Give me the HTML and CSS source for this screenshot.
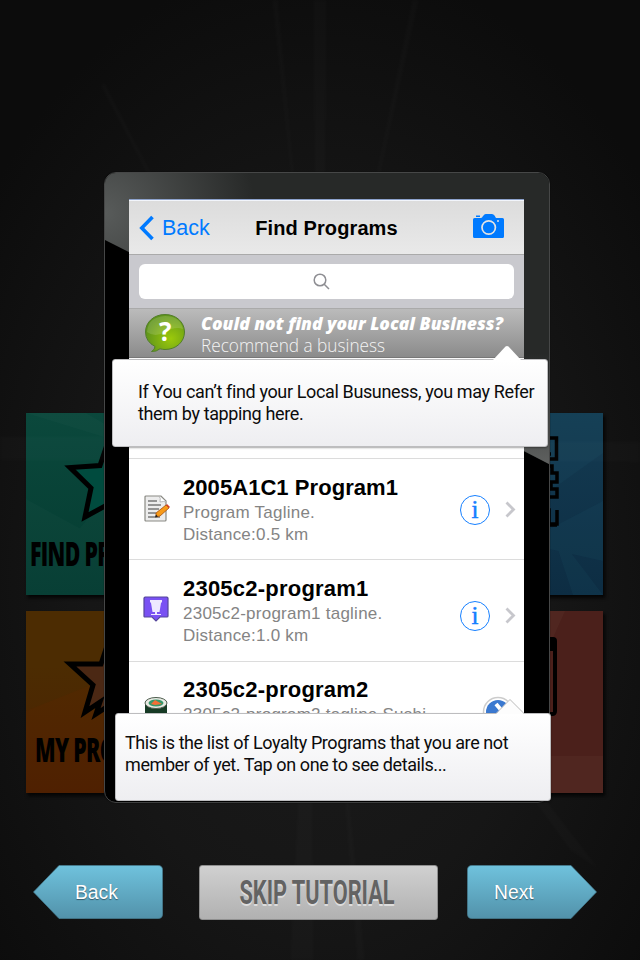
FILE: index.html
```html
<!DOCTYPE html>
<html lang="en">
<head>
<meta charset="utf-8">
<title>Find Programs</title>
<link rel="stylesheet" href="styles.css">
</head>
<body>
<div class="stage">
  <svg class="rays" viewBox="0 0 640 960" aria-hidden="true">
    <g fill="#fff" opacity=".014">
      <path d="M313 0h14l-4 480h-6zM272 0h6l37 400zM412 0h7L330 400zM100 85l5-2 205 398zM290 960l20-400 4 400zM365 960l-38-390 30 390zM0 436l640 6v20L0 460zM600 870L330 520l240 330z"/>
    </g>
  </svg>

  <div class="menu">
    <div class="tile find">
      <svg viewBox="0 0 280 182">
        <path fill="#fff" opacity=".018" d="M0 0h60l170 100L90 182H45L130 40zM0 86l110 60-30 36H0zM50 120L150 0h90L20 182H0z"/>
        <path fill="#004b3e" stroke="#000" stroke-width="5" d="M89 8L74 52.500l-30 2L65 75l-6 29 31-17 31 17-6-29 21-20.500-30-2z"/>
        <text class="label" transform="translate(4 153) scale(.645 1)">FIND PROGRAMS</text>
      </svg>
    </div>
    <div class="tile scan">
      <svg viewBox="0 0 280 182">
        <path fill="#2a6b80" opacity=".1" d="M190 0h90v40l-70 50 70 92h-30zM200 130l80-42v60z"/>
        <g fill="none" stroke="#000" stroke-width="3.500"><path d="M218 25h15.500v21H218M222 30v11h6M220 53h9v7h5v9h-6v7h6v8h-9v7h-5M222 55v12M218 97h8v14h8V97M218 112h16"/></g>
      </svg>
    </div>
    <div class="tile mine">
      <svg viewBox="0 0 280 182">
        <path fill="#a82000" opacity=".06" d="M0 100L100 60v122H0zM15 182l85-50v50z"/>
        <path fill="#4b2814" stroke="#000" stroke-width="5" d="M90 8L75 53H44l23 21-8 27 15-10-4 12 20-13 29 16-8-32 23-21H88z"/>
        <text class="label" transform="translate(9 151) scale(.645 1)">MY PROGRAMS</text>
      </svg>
    </div>
    <div class="tile card">
      <svg viewBox="0 0 280 182">
        <path fill="#806050" opacity=".1" d="M190 0h52l-45 100h-7zM190 145h90v37h-90z"/>
        <path d="M195 26h35q4 0 4 4v70q0 5-5 5h-34v-4h35V40h-35z"/>
      </svg>
    </div>
  </div>

  <div class="tutorial">
    <div class="phone">
      <svg class="gloss" viewBox="0 0 444 629" aria-hidden="true">
        <defs>
          <radialGradient id="shine" gradientUnits="userSpaceOnUse" cx="0" cy="40" r="150"><stop offset="0" stop-color="#585b5a"/><stop offset="1" stop-color="#272928"/></radialGradient>
          <linearGradient id="low" x1="0" y1="0" x2="0" y2="1"><stop offset=".62" stop-color="#5e605f" stop-opacity="0"/><stop offset="1" stop-color="#5e605f"/></linearGradient>
        </defs>
        <path fill="url(#shine)" d="M0 0h444v291L0 67z"/>
        <path fill="url(#low)" d="M419 0h25v291l-25-13z"/>
      </svg>
      <div class="screen">
        <div class="nav">
          <span class="nav-back"><svg width="15" height="26" viewBox="0 0 15 26"><path fill="none" stroke="#007aff" stroke-width="3.600" d="M13.500 2L2.800 13l10.700 11"/></svg>Back</span>
          <span class="nav-title">Find Programs</span>
          <svg class="camera" width="31" height="24" viewBox="0 0 31 24"><path fill="#007aff" d="M1.500 4H8q1 0 2-2l1-1q.5-1 2-1h6q1.500 0 2.500 1.500L23 4h6.500Q31 4 31 5.500v17q0 1.500-1.500 1.500h-28Q0 24 0 22.500v-17Q0 4 1.500 4zM3 1.500h4V3H3z"/><circle cx="15.700" cy="13.500" r="6.700" fill="none" stroke="#e3e3e3" stroke-width="1.700"/><circle cx="25" cy="7" r="1" fill="#e3e3e3"/></svg>
        </div>
        <div class="search"><div class="field"><svg width="17" height="17" viewBox="0 0 17 17"><g fill="none" stroke="#8e8e93" stroke-width="1.500"><circle cx="7" cy="7" r="5.800"/><path d="M11 11l5 5"/></g></svg></div></div>
        <div class="banner">
          <svg width="41" height="40" viewBox="0 0 41 40">
            <defs><radialGradient id="bubble" cx=".65" cy=".65" r=".65"><stop offset="0" stop-color="#9bc90a"/><stop offset="1" stop-color="#5f941b"/></radialGradient></defs>
            <path fill="url(#bubble)" stroke="#527d2c" d="M20 .5c11 0 19.500 7.500 19.500 17.500S31 35.500 20 35.500q-2.500 0-5-.7-3.500 3-8.500 2.700 3.500-2 3.500-5Q.5 27.500.5 18C.5 8 9 .5 20 .5z"/>
            <path fill="#fff" opacity=".14" d="M2 18Q3 3 20 2q15 0 18 13-8-3-18 3T2 18z"/>
            <text class="question" x="14" y="27">?</text>
          </svg>
          <svg class="banner-text" width="305" height="48" viewBox="0 0 305 48">
            <text class="ask" x="0" y="21" textLength="302" lengthAdjust="spacingAndGlyphs">Could not find your Local Business?</text>
            <text class="recommend" x="0" y="43" textLength="184" lengthAdjust="spacingAndGlyphs">Recommend a business</text>
          </svg>
        </div>
        <div class="list">
          <div class="row">
            <svg class="thumb" width="27" height="28" viewBox="0 0 27 28"><path fill="#ececec" stroke="#8a8a84" stroke-width="1.200" d="M3 1h15l5 5v19q0 1-1 1H3q-1 0-1-1V2q0-1 1-1z"/><path fill="#fff" stroke="#aaa" stroke-width=".8" d="M16 1q2 2 1 6 4-1 6 0"/><path stroke="#777" stroke-width="1.300" d="M5 6h9M5 10h13M5 14h11M5 18h8M5 22h12"/><path fill="#f79a18" stroke="#a64f0b" stroke-width=".8" d="M13 18l10-8 3 3-9 8-4 1z"/><path fill="#222" d="M12 22.500l1-3 2 2z"/><path fill="#d53c26" d="M23 10l1-1 3 3-1 1z"/></svg>
            <div class="info"><b>2005A1C1 Program1</b><span>Program Tagline.</span><span>Distance:0.5 km</span></div>
            <i class="detail">i</i>
            <svg class="chevron" width="11" height="17" viewBox="0 0 11 17"><path fill="none" stroke="#c7c7cc" stroke-width="2.800" d="M1.500 1.500l7 7-7 7"/></svg>
          </div>
          <div class="row second">
            <svg class="thumb" width="27" height="28" viewBox="0 0 27 28"><path fill="#7951f3" stroke="#55479b" stroke-width="1.200" d="M2 1h22l1 1v18q0 1-1 1h-7l-4 4-4-4H2q-1 0-1-1V2z"/><path fill="#eee8ff" d="M7 4h12v2l-1 1-1.500 9H14v2h4v1H8v-1h4v-2H9.500L8 7 7 6z"/></svg>
            <div class="info"><b>2305c2-program1</b><span>2305c2-program1 tagline.</span><span>Distance:1.0 km</span></div>
            <i class="detail">i</i>
            <svg class="chevron" width="11" height="17" viewBox="0 0 11 17"><path fill="none" stroke="#c7c7cc" stroke-width="2.800" d="M1.500 1.500l7 7-7 7"/></svg>
          </div>
          <div class="row last">
            <svg class="thumb" width="27" height="28" viewBox="0 0 27 28"><path fill="#173b25" d="M2 7v15q11 7 22 0V7z"/><ellipse cx="13" cy="6" rx="11" ry="5.500" fill="#e9ebe4" stroke="#4d5c4d"/><ellipse cx="13" cy="6" rx="7.500" ry="3.500" fill="#37976b"/><path fill="#f36f36" d="M8 7l4-4 7 4-7 1z"/></svg>
            <div class="info"><b>2305c2-program2</b><span>2305c2-program2 tagline Sushi</span></div>
            <svg class="badge" width="32" height="32" viewBox="0 0 32 32"><circle cx="16" cy="16" r="14.500" fill="#fff" stroke="#ccc" stroke-width="1.500"/><circle cx="16" cy="16" r="12" fill="#3b79d0"/><path fill="none" stroke="#fff" stroke-width="4" d="M14 8l6 7-6 8"/></svg>
          </div>
        </div>
      </div>
    </div>

    <div class="tip tip-refer">
      <svg class="arrow" width="28" height="15" viewBox="0 0 28 15"><path fill="#fff" d="M0 15L12.500 1.500q1.500-1 3 0L28 15z"/></svg>
      <p>If You can’t find your Local Busuness, you may Refer<br>them by tapping here.</p>
    </div>
    <div class="tip tip-list">
      <svg class="arrow" width="28" height="15" viewBox="0 0 28 15"><path fill="#fdfdfd" d="M0 15L14 0l14 15z"/><path fill="none" stroke="#bbb" d="M0 14.500L14 .5l14 14"/></svg>
      <p>This is the list of Loyalty Programs that you are not<br>member of yet. Tap on one to see details...</p>
    </div>

    <div class="actions">
      <div class="arrow-button back">
        <svg width="130" height="54" viewBox="0 0 130 54"><defs><linearGradient id="blue" x1="0" y1="0" x2="0" y2="1"><stop offset="0" stop-color="#6fc2dd"/><stop offset="1" stop-color="#5292aa"/></linearGradient></defs><path fill="url(#blue)" stroke="#487f93" stroke-width=".7" d="M.5 27L26 .5h99q4.500 0 4.500 4.500v44q0 4.500-4.500 4.500H26z"/></svg>
        <span>Back</span>
      </div>
      <div class="skip"><svg width="157" height="36" viewBox="0 0 157 36"><text class="skip-text" x="-.5" y="29" textLength="155" lengthAdjust="spacingAndGlyphs">SKIP TUTORIAL</text></svg></div>
      <div class="arrow-button next">
        <svg width="130" height="54" viewBox="0 0 130 54"><path fill="url(#blue)" stroke="#487f93" stroke-width=".7" d="M129.500 27L104 .5H5Q.5.500.5 5v44q0 4.500 4.500 4.500h99z"/></svg>
        <span>Next</span>
      </div>
    </div>
  </div>
</div>
</body>
</html>
```
FILE: styles.css
```css
* { box-sizing: border-box; }
body { margin: 0; background: #141414; font-family: "Liberation Sans", sans-serif; }
svg { display: block; flex: none; overflow: visible; }
.stage { display: grid; width: 640px; height: 960px; overflow: hidden; background: radial-gradient(ellipse 420px 620px at 50% 60%, #1c1c1c, #161616 55%, #0c0c0c); }
.stage > * { grid-area: 1 / 1; }
.rays { width: 640px; height: 960px; overflow: hidden; filter: blur(1.5px); }

.menu { display: grid; grid-template: 182px 182px / 1fr 1fr; gap: 16px; padding: 413px 37px 0 26px; align-content: start; }
.tile { box-shadow: 2px 3px 3px #050505; overflow: hidden; }
.tile svg { width: 280px; height: 182px; overflow: hidden; }
.find { background: linear-gradient(#0b483c, #043c31); }
.scan { background: linear-gradient(#143b52, #0d2d43); }
.mine { background: linear-gradient(#4c2c02 30%, #4a2002); }
.card { background: #4b201b; }
.label { font: 800 33px "Open Sans", sans-serif; letter-spacing: -1px; }

.tutorial { position: relative; display: flex; flex-direction: column; }
.phone { position: relative; width: 446px; height: 631px; margin: 172px 0 0 104px; padding: 26px 25px 0 24px; border: 1px solid #464747; border-radius: 12px; background: #000; overflow: hidden; box-shadow: 0 0 1px #000; }
.gloss { position: absolute; inset: 0; width: 444px; height: 629px; }
.screen { position: relative; height: 560px; overflow: hidden; background: #fff; }
.nav { display: grid; grid-template-columns: 1fr auto 1fr; align-items: center; height: 56px; padding: 2px 20px 0 10px; background: linear-gradient(#dcdcdc, #e9e9e9); border-top: 1px solid #8da2cc; border-bottom: 1px solid #aaa; box-shadow: inset 0 1px #f2f5fb; }
.nav-back { display: flex; align-items: center; gap: 8px; color: #007aff; font-size: 21.5px; }
.nav-back svg { margin-top: -1px; }
.nav-title { margin: 0 -5px 0 5px; font-weight: 700; font-size: 20px; letter-spacing: .1px; }
.camera { justify-self: end; margin-top: -4px; }
.search { height: 53px; padding: 9px 10px; background: #c9c9ce; }
.field { display: flex; justify-content: center; align-items: center; height: 35px; padding-right: 10px; border-radius: 6px; background: #fff; }
.banner { display: flex; gap: 15px; height: 50px; padding: 5px 0 0 16px; background: linear-gradient(#bbb, #8b8b8b); border-top: 1px solid #aaa; border-bottom: 1px solid #777; }
.banner-text { margin-top: -5px; }
.ask { font: italic 800 18px "Open Sans", sans-serif; fill: #fff; }
.recommend { font: 300 19px "Open Sans", sans-serif; fill: #f4f4f4; }
.question { font: 700 26px "Open Sans", sans-serif; fill: #fff; }

.list { padding-top: 100px; }
.row { display: flex; height: 101px; padding: 16px 8px 0 14px; border-top: 1px solid #dcdcdc; }
.row.second { height: 102px; }
.row.last { padding-top: 15px; }
.thumb { margin-top: 20px; }
.info { display: flex; flex-direction: column; flex: 1; margin-left: 13px; white-space: nowrap; font-size: 17px; line-height: 22px; letter-spacing: .24px; color: #848484; }
.info b { font-size: 22px; line-height: 26px; letter-spacing: .06px; color: #000; }
.second b, .last b { letter-spacing: .22px; }
.info span { position: relative; top: .5px; }
.detail { display: flex; justify-content: center; align-items: center; width: 30px; height: 30px; margin: 20px 15px 0 0; border: 1.5px solid #1680ff; border-radius: 50%; font: 400 25px "Liberation Serif", serif; -webkit-text-stroke: .5px #1680ff; color: #1680ff; }
.chevron { margin-top: 26px; }
.second .detail { margin-top: 25px; }
.second .chevron { margin-top: 31px; }
.badge { margin: 19px 2px 0 0; }

.tip { position: absolute; width: 436px; height: 88px; border: 1px solid #bdbdbf; border-radius: 3px; background: linear-gradient(#fff, #eeeef1); box-shadow: 0 1px 2px rgba(0,0,0,.35); color: #0c0c0c; }
.tip p { margin: 0; font: 18px/22px Roboto, sans-serif; white-space: nowrap; }
.tip-refer { left: 112px; top: 359px; padding: 21px 0 0 25px; letter-spacing: -.37px; }
.tip-list { left: 115px; top: 713px; padding: 18px 0 0 9px; letter-spacing: -.41px; }
.arrow { position: absolute; top: -15px; }
.tip-refer .arrow { left: 380px; }
.tip-list .arrow { left: 380px; }

.actions { display: flex; width: 566px; margin: 63px 0 0 32.5px; }
.arrow-button { display: grid; align-items: center; height: 54px; margin-top: -1px; }
.arrow-button > * { grid-area: 1 / 1; }
.arrow-button span { padding-top: 1px; font-size: 19.3px; color: #fff; text-shadow: 0 1px 1px #355969; }
.back span { padding-left: 42.5px; }
.next span { padding-left: 27px; }
.skip { display: flex; justify-content: center; align-items: center; width: 239px; height: 55px; margin: -1px 29px 0 36.5px; border: 1px solid #8f8f8f; border-radius: 3px; background: linear-gradient(#d0d0d0, #b1b1b1); }
.skip-text { font: 700 34px Roboto, sans-serif; fill: #636363; text-shadow: 0 1.5px #ddd; }
```
